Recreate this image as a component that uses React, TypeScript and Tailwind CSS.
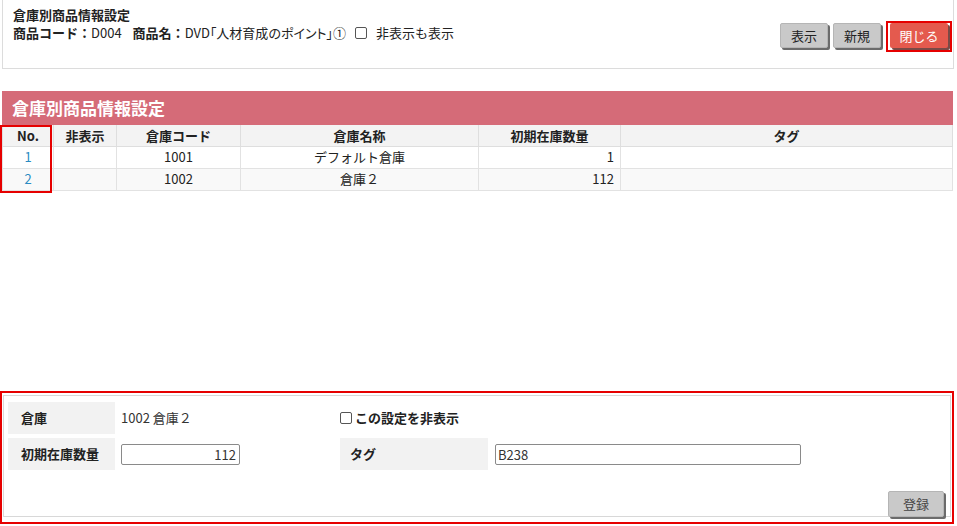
import React from "react";

type Row = { no: number; hidden: string; code: string; name: string; qty: string; tag: string };

const rows: Row[] = [
  { no: 1, hidden: "", code: "1001", name: "デフォルト倉庫", qty: "1", tag: "" },
  { no: 2, hidden: "", code: "1002", name: "倉庫２", qty: "112", tag: "" },
];

function GrayButton({ label }: { label: string }) {
  return (
    <button
      type="button"
      className="h-[25px] rounded-[2px] border border-[#b5b5b5] bg-[#c9c9c9] px-[10px] text-[13px] text-[#222] shadow-[2px_2px_0_#6b6b6b]"
    >
      {label}
    </button>
  );
}

export default function App() {
  return (
    <div
      className="relative h-[526px] w-[957px] overflow-hidden bg-white text-[13px] text-[#222]"
      style={{ fontFamily: '"Noto Sans CJK JP", "Noto Sans", sans-serif' }}
    >
      {/* top panel */}
      <section className="ml-[2px] flex h-[69px] w-[952px] justify-between border border-t-0 border-[#dcdcdc] pl-[10px] pr-[1px]">
        <div className="pt-[6px] leading-[18px]">
          <div className="font-bold">倉庫別商品情報設定</div>
          <div className="flex items-center">
            <span className="font-bold">商品コード：</span>
            <span>D004</span>
            <span className="ml-[11px] font-bold">商品名：</span>
            <span className="[font-feature-settings:'palt']">DVD「人材育成のポイント」①</span>
            <span className="ml-[9px] inline-block h-[12px] w-[12px] rounded-[2px] border border-[#555] bg-white" />
            <span className="ml-[9px]">非表示も表示</span>
          </div>
        </div>
        <div className="flex items-start gap-[5px] pt-[21px]">
          <div className="mt-[2px]">
            <GrayButton label="表示" />
          </div>
          <div className="mt-[2px]">
            <GrayButton label="新規" />
          </div>
          <div className="border-2 border-[#e60000] pb-[2px] pl-[2px] pr-[2px] pt-[0px]">
            <button
              type="button"
              className="h-[25px] w-[58px] rounded-[2px] bg-[#e45a4e] text-[13px] text-white shadow-[2px_2px_0_#7a4a46]"
            >
              閉じる
            </button>
          </div>
        </div>
      </section>

      {/* list */}
      <section className="relative ml-[2px] mt-[22px] w-[951px]">
        <h2 className="flex h-[34px] items-center bg-[#d56b78] pl-[10px] text-[17px] font-bold text-white">
          倉庫別商品情報設定
        </h2>
        <table className="w-full border-collapse text-[13px]">
          <thead>
            <tr className="h-[21px] bg-[#f3f3f3] font-bold">
              <th className="w-[51px] border border-t-0 border-[#dedede]">No.</th>
              <th className="w-[63px] border border-t-0 border-[#dedede]">非表示</th>
              <th className="w-[124px] border border-t-0 border-[#dedede]">倉庫コード</th>
              <th className="w-[238px] border border-t-0 border-[#dedede]">倉庫名称</th>
              <th className="w-[142px] border border-t-0 border-[#dedede]">初期在庫数量</th>
              <th className="border border-t-0 border-[#dedede]">タグ</th>
            </tr>
          </thead>
          <tbody>
            {rows.map((r, i) => (
              <tr key={r.no} className={i % 2 === 0 ? "h-[22px] bg-white" : "h-[22px] bg-[#f9f9f9]"}>
                <td className="border border-[#e2e2e2] text-center text-[#2a8bc2]">{r.no}</td>
                <td className="border border-[#e2e2e2]">{r.hidden}</td>
                <td className="border border-[#e2e2e2] text-center">{r.code}</td>
                <td className="border border-[#e2e2e2] text-center">{r.name}</td>
                <td className="border border-[#e2e2e2] pr-[6px] text-right">{r.qty}</td>
                <td className="border border-[#e2e2e2]">{r.tag}</td>
              </tr>
            ))}
          </tbody>
        </table>
        <div className="pointer-events-none absolute left-[-2px] top-[34px] h-[68px] w-[52px] border-2 border-[#e60000]" />
      </section>

      {/* edit form */}
      <section className="absolute left-0 top-[391px] h-[133px] w-[954px] border-2 border-[#e60000] px-[1px] pt-[2px]">
        <div className="flex h-[122px] flex-col border border-[#d8d8d8] px-[4px] pt-[6px]">
          <div className="flex h-[32px] items-center">
            <div className="flex h-full w-[107px] items-center bg-[#f2f2f2] pl-[13px] font-bold">倉庫</div>
            <div className="ml-[6px] w-[219px] text-[#333]">1002 倉庫２</div>
            <label className="flex items-center font-bold">
              <span className="mr-[3px] inline-block h-[12px] w-[12px] rounded-[2px] border border-[#555] bg-white" />
              この設定を非表示
            </label>
          </div>
          <div className="mt-[4px] flex h-[32px] items-center">
            <div className="flex h-full w-[107px] items-center bg-[#f2f2f2] pl-[13px] font-bold">初期在庫数量</div>
            <input
              readOnly
              value="112"
              className="ml-[6px] h-[21px] w-[119px] rounded-[2px] border border-[#8a8a8a] px-[3px] text-right text-[13px] text-[#333] outline-none"
            />
            <div className="ml-[100px] flex h-full w-[148px] items-center bg-[#f2f2f2] pl-[10px] font-bold">タグ</div>
            <input
              readOnly
              value="B238"
              className="ml-[7px] h-[21px] w-[306px] rounded-[2px] border border-[#8a8a8a] px-[2px] text-[13px] text-[#333] outline-none"
            />
          </div>
          <div className="mt-auto flex justify-end pr-[2px]">
            <button
              type="button"
              className="mb-[-1px] h-[26px] w-[56px] rounded-[2px] border border-[#b5b5b5] bg-[#c9c9c9] text-[13px] text-[#444] shadow-[2px_2px_0_#6b6b6b]"
            >
              登録
            </button>
          </div>
        </div>
      </section>
    </div>
  );
}
